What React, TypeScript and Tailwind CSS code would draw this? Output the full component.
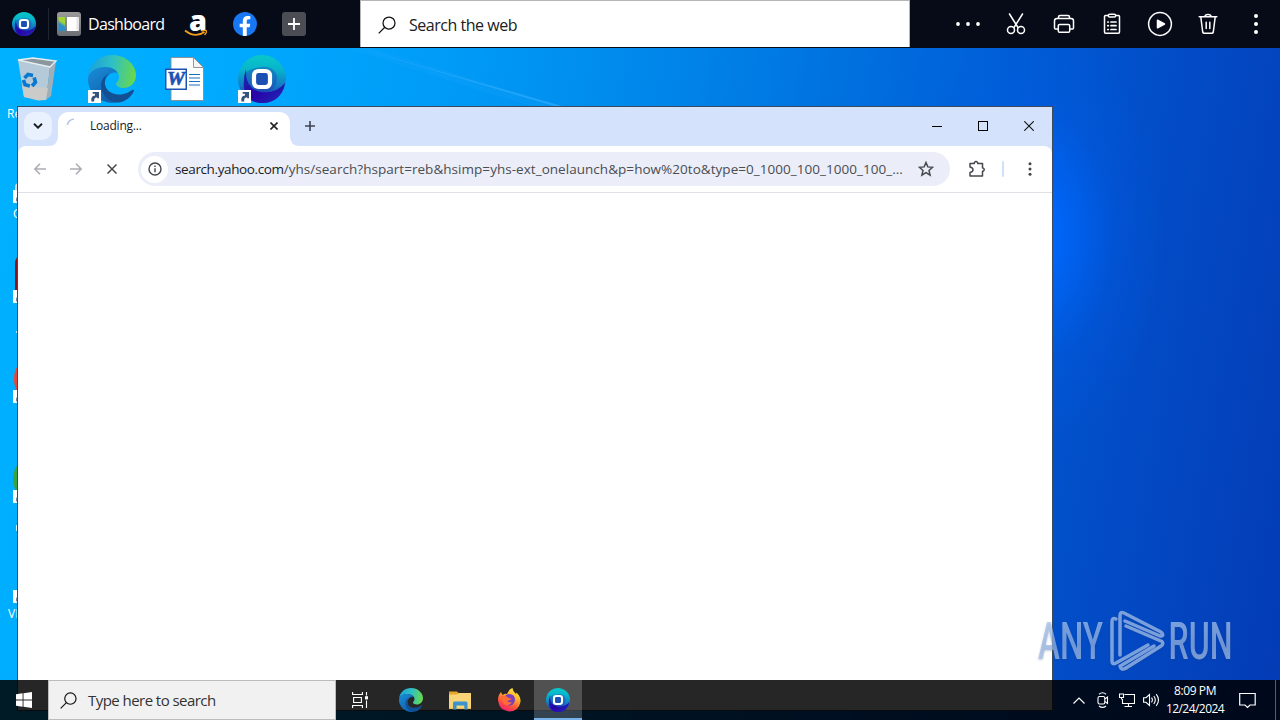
import type { ReactNode } from "react";
import { FaFacebookF } from "react-icons/fa";

const SEGOE = "font-['Open_Sans','Noto_Sans',sans-serif]";

function OneLaunchLogo({ id, size }: { id: string; size: number }) {
  return (
    <svg width={size} height={size} viewBox="0 0 48 48">
      <defs>
        <linearGradient id={`${id}-a`} x1="0.6" y1="0" x2="0.6" y2="1">
          <stop offset="0" stopColor="#08c8c8" />
          <stop offset="0.3" stopColor="#08b4cc" />
          <stop offset="0.65" stopColor="#1478c4" />
          <stop offset="1" stopColor="#2a12a8" />
        </linearGradient>
        <linearGradient id={`${id}-b`} x1="0" y1="0" x2="1" y2="1">
          <stop offset="0" stopColor="#1038b0" />
          <stop offset="0.5" stopColor="#2a00a8" />
          <stop offset="1" stopColor="#1d30b8" />
        </linearGradient>
      </defs>
      <circle cx="24" cy="24" r="24" fill={`url(#${id}-a)`} />
      <path d="M8 14 Q7 34 23 37 Q38 39 47 28 Q43 48 24 48 Q10 47 6 34 Q5 22 8 14Z" fill={`url(#${id}-b)`} />
      <path d="M8 17 Q18 11 29 12 Q39 14 39 24 Q38 36 25 38 Q8 34 8 17Z" fill="#2230b0" opacity="0.35" />
      <rect x="16" y="16" width="16" height="16" rx="4.5" fill="#1b4fb4" stroke="#fff" strokeWidth="4.2" />
    </svg>
  );
}

function EdgeLogo({ id, size }: { id: string; size: number }) {
  return (
    <svg width={size} height={size} viewBox="0 0 48 48">
      <defs>
        <linearGradient id={`${id}-a`} x1="0" y1="0.3" x2="1" y2="0.4">
          <stop offset="0" stopColor="#1a9fdc" />
          <stop offset="0.5" stopColor="#2fc0c4" />
          <stop offset="1" stopColor="#68d84c" />
        </linearGradient>
        <linearGradient id={`${id}-b`} x1="0" y1="0" x2="0.6" y2="1">
          <stop offset="0" stopColor="#1a8ed8" />
          <stop offset="1" stopColor="#0f5fae" />
        </linearGradient>
      </defs>
      <path d="M0 21 C2 8 12 0 24 0 C38 0 48 10 48 20 C48 28 42 33 36 33 C31 33 28 31 28 29 C28 27 31 26 31 22 C31 17 25 12 17 12 C8 12 2 17 0 21Z" fill={`url(#${id}-a)`} />
      <path d="M0 24 C0 17 8 12 17 12 C24 12 28 15 30 18 C22 16 17 22 17 29 C17 38 24 46 31 47 C15 51 0 39 0 24Z" fill={`url(#${id}-b)`} />
      <path d="M21 19 C13 25 17 37 27 39 C35 41 41 37 44 35 C47 34 46 36 45 38 C41 44 36 47 30 47.5 C20 47 13 39 13 31 C13 25 16 21 21 19Z" fill="#124f93" />
    </svg>
  );
}

function ShortcutBadge() {
  return (
    <svg className="absolute bottom-0 left-0" width="13" height="13" viewBox="0 0 13 13">
      <rect width="13" height="13" fill="#fff" />
      <path d="M3.500 11.500 C2.800 8 4 5.700 7 5.500 V3.800 H4.700 V2 H11 V8.200 H9.200 V7.200 C6.500 7.400 6 9 6.200 11.500Z" fill="#35517e" />
    </svg>
  );
}

function DesktopIcon({ place, children, shortcut = false }: { place: string; children?: ReactNode; shortcut?: boolean }) {
  return (
    <div className={`absolute h-12 w-12 ${place}`}>
      {children}
      {shortcut && <ShortcutBadge />}
    </div>
  );
}

function RecycleBin() {
  return (
    <svg width="48" height="48" viewBox="0 0 48 48">
      <path d="M5 5 L20 3 L43 6 L37 13Z" fill="#8b979f" />
      <path d="M5 5 L37 12 L33 45 L11 42Z" fill="#b4cad8" />
      <path d="M37 12 L43 6 L38 41 L33 45Z" fill="#9fafb9" />
      <path d="M9 31 L35 33 L33 45 L25 45.500 L11 42Z" fill="#cbcbc9" />
      <path d="M5 5 L20 3 L43 6 L37 12Z" fill="none" stroke="#e6eef2" strokeWidth="1.400" />
      <g transform="translate(16.500 25.500)" fill="none" stroke="#0878d0" strokeWidth="3.600">
        <path d="M-5 -2.500 L-1.500 -6 L3.500 -5" />
        <path d="M-5 -2.500 L-1.500 -6 L3.500 -5" transform="rotate(120)" />
        <path d="M-5 -2.500 L-1.500 -6 L3.500 -5" transform="rotate(240)" />
      </g>
    </svg>
  );
}

function WordDocument() {
  return (
    <svg width="48" height="48" viewBox="0 0 48 48">
      <path d="M11 2.500 H33.500 L43.500 12.500 V45.500 H11Z" fill="#fff" stroke="#8b8b8b" strokeWidth="0.900" />
      <path d="M33.500 2.500 V12.500 H43.500Z" fill="#f5f5f5" stroke="#8b8b8b" strokeWidth="0.900" />
      <path d="M29 19.500 H40 M29 23 H40 M29 26.500 H40 M29 30 H40" stroke="#1b71bd" strokeWidth="1.200" />
      <rect x="5" y="13.500" width="22" height="21.500" fill="#1b53b5" />
      <rect x="6.500" y="15" width="19" height="18.500" fill="#fff" />
      <text x="16" y="30" textAnchor="middle" fontFamily="Liberation Serif" fontWeight="700" fontStyle="italic" fontSize="18" textLength="18" lengthAdjust="spacingAndGlyphs" fill="#1b53b5" stroke="#1b53b5" strokeWidth="0.600">W</text>
    </svg>
  );
}

function Magnifier({ className }: { className: string }) {
  return (
    <svg className={className} viewBox="0 0 18 18" fill="none" stroke="#111" strokeWidth="1.250">
      <circle cx="11" cy="7" r="6" />
      <path d="M6.800 11.300 L0.700 17.400" />
    </svg>
  );
}

function ToolButton({ children }: { children: ReactNode }) {
  return (
    <button className="grid h-12 w-12 place-items-center">
      <svg width="28" height="28" viewBox="0 0 28 28" fill="none" stroke="#fff" strokeWidth="1.500" strokeLinejoin="round" strokeLinecap="round">
        {children}
      </svg>
    </button>
  );
}

function TopBar() {
  return (
    <header className="relative z-10 flex h-12 shrink-0 bg-[#060b17]">
      <div className="flex w-[360px] items-center">
        <div className="grid h-8 w-12 place-items-center"><OneLaunchLogo id="top" size={24} /></div>
        <div className="h-8 w-px bg-[#20242e]" />
        <svg className="ml-2" width="24" height="24" viewBox="0 0 24 24">
          <defs>
            <linearGradient id="dash" x1="0" y1="0" x2="0" y2="1">
              <stop offset="0" stopColor="#9b9b9b" /><stop offset="1" stopColor="#6b6f72" />
            </linearGradient>
            <linearGradient id="dash-side" x1="0.500" y1="0" x2="0.200" y2="1">
              <stop offset="0.300" stopColor="#a2d436" /><stop offset="0.550" stopColor="#2d8fc9" />
            </linearGradient>
          </defs>
          <rect width="24" height="24" rx="3" fill="url(#dash)" />
          <path d="M1.500 5 H8 V19 H1.500Z" fill="url(#dash-side)" />
          <path d="M10 5 H22 V19 H10Z" fill="#fff" />
          <path d="M19.500 5 H22 V19 H19.500Z" fill="#e4e4e4" />
        </svg>
        <span className="ml-[7px] w-[78px] whitespace-nowrap text-[16px] tracking-[-0.680px] text-white">Dashboard</span>
        <span className="relative ml-[16px] block h-12 w-8">
          <span className="absolute inset-x-0 top-0 text-center text-[29px] font-extrabold leading-[39px] text-white">a</span>
          <svg className="absolute inset-x-0 top-0" width="32" height="48" viewBox="3 0 32 48">
            <path d="M6 30.500 Q16 38.500 25.500 32" fill="none" stroke="#f5a01d" strokeWidth="1.800" />
            <path d="M22.500 31 Q26.500 30 27.500 30.800 Q28 32.500 25.500 35" fill="none" stroke="#f5a01d" strokeWidth="1.300" />
          </svg>
        </span>
        <span className="ml-[19px] flex h-6 w-6 items-end justify-center overflow-hidden rounded-full bg-[#1877f2]">
          <FaFacebookF className="h-[20px] w-[14px] text-white" />
        </span>
        <button className="ml-[25px] grid h-6 w-6 place-items-center rounded-[3px] bg-[#4b4d55]">
          <svg width="12" height="12" viewBox="0 0 12 12"><path d="M6 0 V12 M0 6 H12" stroke="#fff" strokeWidth="1.800" /></svg>
        </button>
      </div>
      <div className="flex h-[47px] w-[550px] items-center border border-b-0 border-[#b5b5b5] bg-white pt-[2px]">
        <Magnifier className="ml-[17px] h-[18px] w-[18px]" />
        <span className="ml-[13px] whitespace-nowrap text-[16px] tracking-[-0.470px] text-[#202020]">Search the web</span>
      </div>
      <nav className="ml-auto flex">
        <ToolButton><g fill="#fff" stroke="none"><circle cx="4" cy="14" r="1.900" /><circle cx="14" cy="14" r="1.900" /><circle cx="24" cy="14" r="1.900" /></g></ToolButton>
        <ToolButton><path d="M7.500 4 L16 17.500 M20.500 4 L12 17.500" /><circle cx="9" cy="20" r="3.500" /><circle cx="19" cy="20" r="3.500" /></ToolButton>
        <ToolButton><path d="M8.500 8 V7 Q8.500 5.500 10 5.500 H18 Q19.500 5.500 19.500 7 V8 M8 19 H5.500 Q4.500 19 4.500 18 V11 Q4.500 8.500 7 8.500 H21 Q23.500 8.500 23.500 11 V18 Q23.500 19 22.500 19 H20" /><rect x="8.300" y="14.500" width="11.400" height="7.700" rx="1.300" /></ToolButton>
        <ToolButton><path d="M10 5.500 H7.500 Q6.500 5.500 6.500 6.500 V22 Q6.500 23.200 7.500 23.200 H20.500 Q21.500 23.200 21.500 22 V6.500 Q21.500 5.500 20.500 5.500 H18" /><rect x="10.300" y="4.300" width="7.400" height="2.800" rx="1.400" /><path d="M9.800 12 H10.300 M13 12 H18 M9.800 15.700 H10.300 M13 15.700 H18 M9.800 19.500 H10.300 M13 19.500 H18" strokeWidth="1.700" /></ToolButton>
        <ToolButton><circle cx="14" cy="14" r="11.400" strokeWidth="1.500" /><path d="M11.500 10.200 L18.500 14 L11.500 17.800Z" fill="#fff" /></ToolButton>
        <ToolButton><path d="M5.200 6.800 H22.800 M11 6.500 Q11 4.500 14 4.500 Q17 4.500 17 6.500 M6.800 7 L8.700 22 Q9 23.300 10.300 23.300 H17.700 Q19 23.300 19.300 22 L21.200 7 M12.200 12.300 V18.500 M15.800 12.300 V18.500" /></ToolButton>
        <ToolButton><g fill="#fff" stroke="none"><circle cx="14" cy="6" r="2" /><circle cx="14" cy="14" r="2" /><circle cx="14" cy="22" r="2" /></g></ToolButton>
      </nav>
    </header>
  );
}

function DesktopIcons() {
  return (
    <div className="absolute inset-0 text-[12px] leading-4 text-white">
      <DesktopIcon place="left-[13px] top-[7px]"><RecycleBin /></DesktopIcon>
      <DesktopIcon place="left-[88px] top-[7px]" shortcut><EdgeLogo id="desk-edge" size={48} /></DesktopIcon>
      <DesktopIcon place="left-[160px] top-[7px]"><WordDocument /></DesktopIcon>
      <DesktopIcon place="left-[238px] top-[7px]" shortcut><OneLaunchLogo id="desk-one" size={48} /></DesktopIcon>
      <DesktopIcon place="left-[13px] top-[107px]" shortcut><div className="absolute bottom-3 left-[2px] h-2 w-8 rounded-t bg-[#d8d8d8]" /></DesktopIcon>
      <DesktopIcon place="left-[13px] top-[207px]" shortcut><div className="ml-0.5 h-11 rounded-lg bg-[#8e1016]" /></DesktopIcon>
      <DesktopIcon place="left-[13px] top-[307px]" shortcut><div className="ml-px h-12 rounded-full bg-[#e84638]" /></DesktopIcon>
      <DesktopIcon place="left-[13px] top-[407px]" shortcut><div className="h-12 rounded-full bg-[#39a342]" /></DesktopIcon>
      <DesktopIcon place="left-[13px] top-[507px]" shortcut />
      <span className="absolute left-[7px] top-[58px]">Re</span>
      <span className="absolute left-[13px] top-[158px]">C</span>
      <span className="absolute left-[16px] top-[283px] h-0.5 w-0.5 bg-white/70" />
      <span className="absolute left-[16px] top-[477px] h-1.5 w-px bg-white/80" />
      <span className="absolute left-[8px] top-[558px]">VL</span>
    </div>
  );
}

function TabStrip() {
  return (
    <div className="flex h-[39px] items-start bg-[#d4e2fc] pl-1.5 pt-[5px]">
      <button className="grid h-7 w-7 place-items-center rounded-[10px] bg-[#eaf1fe]">
        <svg width="10" height="6" viewBox="0 0 10 6"><path d="M1 0.800 L5 4.700 L9 0.800" fill="none" stroke="#1b1d22" strokeWidth="1.900" /></svg>
      </button>
      <div className="relative ml-1.5 flex h-[34px] w-[232px] items-start rounded-t-[10px] bg-white pt-[3px]">
        <svg className="absolute -left-2.5 bottom-0" width="10" height="10"><path d="M10 0 V10 H0 Q10 10 10 0Z" fill="#fff" /></svg>
        <svg className="absolute -right-2.5 bottom-0" width="10" height="10"><path d="M0 0 V10 H10 Q0 10 0 0Z" fill="#fff" /></svg>
        <svg className="ml-2 mt-[3px]" width="14" height="14" viewBox="0 0 14 14"><path d="M1.300 7 A6.500 6.500 0 0 1 8 1.200" fill="none" stroke="#b7c6e6" strokeWidth="1.600" /></svg>
        <span className="ml-[10px] mt-[3px] whitespace-nowrap text-[12px] leading-4 tracking-[-0.220px] text-[#202124]">Loading...</span>
        <svg className="ml-auto mr-3 mt-[7px]" width="8" height="8" viewBox="0 0 8 8"><path d="M0.500 0.500 L7.500 7.500 M7.500 0.500 L0.500 7.500" stroke="#202124" strokeWidth="1.600" /></svg>
      </div>
      <svg className="ml-[15px] mt-[9px]" width="10" height="10" viewBox="0 0 10 10"><path d="M5 0 V10 M0 5 H10" stroke="#3c4351" strokeWidth="1.600" /></svg>
      <div className="ml-auto flex h-7 items-center">
        <div className="grid w-[46px] place-items-center"><div className="h-px w-[10px] bg-black" /></div>
        <div className="grid w-[46px] place-items-center"><div className="h-[10px] w-[10px] border border-black" /></div>
        <div className="grid w-[46px] place-items-center"><svg width="10" height="10" viewBox="0 0 10 10"><path d="M0.300 0.300 L9.700 9.700 M9.700 0.300 L0.300 9.700" stroke="#111" strokeWidth="1.100" /></svg></div>
      </div>
    </div>
  );
}

function BrowserWindow() {
  return (
    <section className="absolute left-[17px] top-[58px] flex h-[605px] w-[1036px] flex-col border border-[#3c4a5c] bg-white">
      <TabStrip />
      <div className="bg-[#d4e2fc]">
        <div className="flex h-[47px] items-center rounded-t-[8px] border-b border-[#dfe1e6] bg-white">
          <svg className="ml-4" width="12" height="12" viewBox="0 0 12 12" fill="none" stroke="#abadb1" strokeWidth="1.500"><path d="M12 6 H1 M6 0.700 L0.900 6 L6 11.300" /></svg>
          <svg className="ml-6" width="12" height="12" viewBox="0 0 12 12" fill="none" stroke="#abadb1" strokeWidth="1.500"><path d="M0 6 H11 M6 0.700 L11.100 6 L6 11.300" /></svg>
          <svg className="ml-[25px]" width="10" height="10" viewBox="0 0 10 10"><path d="M0.500 0.500 L9.500 9.500 M9.500 0.500 L0.500 9.500" stroke="#45484c" strokeWidth="1.500" /></svg>
          <div className="ml-[21px] flex h-[34px] w-[812px] items-center rounded-full bg-[#ebeef8] pl-[3px]">
            <span className="grid h-[27px] w-[27px] place-items-center rounded-full bg-white">
              <svg width="14" height="14" viewBox="0 0 14 14" fill="none" stroke="#42454a"><circle cx="7" cy="7" r="6" strokeWidth="1.400" /><path d="M7 6.300 V10.200 M7 3.600 V5" strokeWidth="1.400" /></svg>
            </span>
            <span className="ml-[7px] w-[729px] whitespace-nowrap text-[13.5px] leading-5 text-[#4a4d52]"><span className="tracking-[-0.380px] text-[#202124]">search.yahoo.com</span><span className="tracking-[0.040px]">/yhs/search?hspart=reb&amp;hsimp=yhs-ext_onelaunch&amp;p=how%20to&amp;type=0_1000_100_1000_100_...</span></span>
            <svg className="ml-[14px]" width="16" height="16" viewBox="0 0 16 16"><path d="M8 1.500 L9.850 5.900 L14.600 6.300 L11 9.400 L12.100 14.100 L8 11.600 L3.900 14.100 L5 9.400 L1.400 6.300 L6.150 5.900Z" fill="none" stroke="#45484d" strokeWidth="1.500" /></svg>
          </div>
          <svg className="ml-[18px]" width="18" height="18" viewBox="0 0 18 18"><path d="M2 3.500 H6.300 V2.600 Q8 0.300 9.700 2.600 V3.500 H14.500 V8 H15.200 Q17.300 9.600 15.200 11.200 H14.500 V16 H2 V12.500 Q5 11.800 5 9.800 Q5 7.800 2 7.100Z" fill="none" stroke="#45484d" strokeWidth="1.500" strokeLinejoin="round" /></svg>
          <div className="ml-[16px] h-4 w-0.5 rounded bg-[#d0e0fb]" />
          <svg className="ml-[24px]" width="4" height="14" viewBox="0 0 4 14" fill="#42454a"><circle cx="2" cy="1.800" r="1.500" /><circle cx="2" cy="7" r="1.500" /><circle cx="2" cy="12.200" r="1.500" /></svg>
        </div>
      </div>
      <div className="flex-1 bg-white" />
    </section>
  );
}

function Watermark() {
  return (
    <svg className="absolute left-[1036px] top-[560px] overflow-visible drop-shadow-[0_1px_1px_rgba(30,60,110,0.35)]" width="220" height="70" viewBox="0 0 220 70">
      <defs>
        <linearGradient id="mark" x1="0" y1="0" x2="0" y2="1">
          <stop offset="0" stopColor="#aecdf5" /><stop offset="0.550" stopColor="#98b6e4" /><stop offset="1" stopColor="#b6c8e2" />
        </linearGradient>
      </defs>
      <g opacity="0.720">
        <g fill="url(#mark)" fontFamily="Roboto" fontWeight="500" fontSize="52">
          <text x="2" y="51" textLength="65" lengthAdjust="spacingAndGlyphs">ANY</text>
          <text x="132.500" y="51" textLength="64" lengthAdjust="spacingAndGlyphs">RUN</text>
        </g>
        <g fill="none" stroke="#a8c4ee" strokeWidth="3.500" strokeLinejoin="round" strokeLinecap="round">
          <path d="M80 11 Q76 9 76 14 V53 Q76 57 80 55 L112 37" />
          <path d="M84 47 V8 Q84 3 88 5 L125 24 Q129 28 124 28 L89 13" />
          <path d="M90 18 L126 33.500 Q128 36 125 38 L90 60" />
          <path d="M84 58 Q85 63 90 60 M86 57 L118 38" />
        </g>
      </g>
    </svg>
  );
}

function Taskbar() {
  return (
    <footer className="relative z-10 flex h-10 shrink-0 bg-black/85">
      <div className="grid w-12 place-items-center">
        <svg width="16" height="16" viewBox="0 0 16 16" fill="#fff"><path d="M0 2.300 L6.600 1.300 V7.500 H0Z M7.500 1.200 L16 0 V7.500 H7.500Z M0 8.400 H6.600 V14.700 L0 13.700Z M7.500 8.400 H16 V16 L7.500 14.800Z" /></svg>
      </div>
      <div className="flex w-[288px] items-center border border-[#bdbdbd] bg-[#f1f1f1]">
        <Magnifier className="ml-[11px] h-[17px] w-[17px]" />
        <span className="ml-[11px] whitespace-nowrap text-[15px] tracking-[-0.550px] text-[#333]">Type here to search</span>
      </div>
      <div className="grid w-12 place-items-center">
        <svg width="16" height="16" viewBox="0 0 16 16" fill="none" stroke="#fff" strokeWidth="1.100"><path d="M0.600 0 V2.500 H10.400 V0 M0.600 16 V13.500 H10.400 V16 M1.600 5.500 H9.400 V10.500 H1.600Z M14.500 0 V3.500 M14.500 8.500 V16" /><rect x="13" y="4.200" width="3" height="3.200" fill="#fff" stroke="none" /></svg>
      </div>
      <div className="grid w-[54px] place-items-center"><EdgeLogo id="bar-edge" size={24} /></div>
      <div className="grid w-11 place-items-center">
        <svg width="22" height="19" viewBox="0 0 22 19"><path d="M0 0.500 H8 L10 2.500 H22 V18 H0Z" fill="#e8a52a" /><path d="M0 3.500 H8 L10 2 H22 V17.500 H0Z" fill="#f8d477" /><path d="M4 18.500 V12 Q4 10.500 5.500 10.500 H17 Q18.500 10.500 18.500 12 V18.500 H15.300 V14.500 H7.500 V18.500Z" fill="#3b92cf" /></svg>
      </div>
      <div className="grid w-[54px] place-items-center">
        <svg width="24" height="24" viewBox="0 0 24 24">
          <defs><linearGradient id="fox" x1="0.800" y1="0" x2="0.300" y2="1"><stop offset="0" stopColor="#fff04a" /><stop offset="0.350" stopColor="#ffb42b" /><stop offset="0.700" stopColor="#ff543d" /><stop offset="1" stopColor="#ef1d72" /></linearGradient></defs>
          <path d="M1 12 Q1 7 4 4 L5.500 7 Q8 5 10 6 Q12 1 15.500 0 Q15.500 3 19 6 L19.500 4.500 Q24 9 23.500 14 Q21.500 23.500 12 23.500 Q2 22.500 1 12Z" fill="url(#fox)" />
          <path d="M12 6 Q18 6 18 12 Q17 18 11.500 17.500 Q7.500 16 7 12 Q9.500 13.500 12 11.500 L7.500 9 Q9 6 12 6Z" fill="#7940bd" />
          <path d="M3 9 Q7 6 12 10 L15 11 Q12 12.500 10 13 Q12 15 15 14 Q12 19 7 16Z" fill="#ff6c36" />
        </svg>
      </div>
      <div className="-ml-0.5 grid w-12 place-items-center border-b-2 border-[#76b1ea] bg-white/20 pt-0.5"><OneLaunchLogo id="bar-one" size={24} /></div>
      <div className="ml-auto flex items-center">
        <div className="grid w-6 place-items-center"><svg width="12" height="7" viewBox="0 0 12 7"><path d="M0.500 6.500 L6 1 L11.500 6.500" fill="none" stroke="#fff" strokeWidth="1.200" /></svg></div>
        <div className="grid w-6 place-items-center"><svg width="12" height="16" viewBox="0 0 12 16" fill="none" stroke="#fff" strokeWidth="1.100"><rect x="1" y="4.500" width="6.800" height="7.500" rx="1.500" /><path d="M7.800 7 L10.500 5 V11.500 L7.800 9.500 M2 2.200 Q5.500 -0.600 9 2.200 M2 14 Q5.500 16.800 9 14" /></svg></div>
        <div className="grid w-6 place-items-center"><svg width="16" height="15" viewBox="0 0 16 15" fill="none" stroke="#fff" strokeWidth="1.100"><path d="M5.500 1.500 H15.500 V10.500 H3.500 V6 M9.500 10.500 V13.500 M5.500 13.500 H13 M0.500 1 H4.500 V4.500 H0.500Z M2.500 4.500 V6.500" /></svg></div>
        <div className="grid w-6 place-items-center"><svg width="17" height="14" viewBox="0 0 17 14" fill="none" stroke="#fff" strokeWidth="1.100"><path d="M0.600 4.700 H3 L6.500 1.500 V12.500 L3 9.300 H0.600Z M8.500 4.600 Q10.300 7 8.500 9.400 M10.800 3 Q13.800 7 10.800 11 M13.200 1.200 Q17.800 7 13.200 12.800" /></svg></div>
        <div className="w-16 whitespace-nowrap text-center text-[12px] leading-[18px] tracking-[-0.550px] text-white"><span className="tracking-[-0.400px]">8:09 PM</span><br />12/24/2024</div>
        <div className="grid w-10 place-items-center"><svg width="17" height="17" viewBox="0 0 17 17"><path d="M0.700 1.500 H16.200 V13 H11 L8.500 15.500 L6 13 H0.700Z" fill="none" stroke="#fff" strokeWidth="1.200" /></svg></div>
        <div className="ml-2 mr-1 h-10 w-px bg-[#59606c]" />
      </div>
    </footer>
  );
}

export default function App() {
  return (
    <div className={`relative flex h-[720px] w-[1280px] flex-col overflow-hidden bg-[radial-gradient(ellipse_130px_210px_at_1035px_235px,#006aff_0%,#0068ffc0_22%,#005ce850_60%,#0055d000_100%),linear-gradient(100deg,#00b2ff_0%,#00aaff_16%,#009af6_34%,#0083e8_50%,#0060d8_71%,#024fca_82%,#0344be_92%,#033bb4_100%)] ${SEGOE}`}>
      <TopBar />
      <main className="relative flex-1">
        <svg className="absolute inset-0" width="600" height="60"><path d="M345 0 L372 0 L562 58 L530 58Z" fill="#22aaff" opacity="0.160" /><path d="M358 0 L562 58 L554 58Z" fill="#3aafff" opacity="0.550" /></svg>
        <DesktopIcons />
        <BrowserWindow />
        <Watermark />
      </main>
      <Taskbar />
    </div>
  );
}
